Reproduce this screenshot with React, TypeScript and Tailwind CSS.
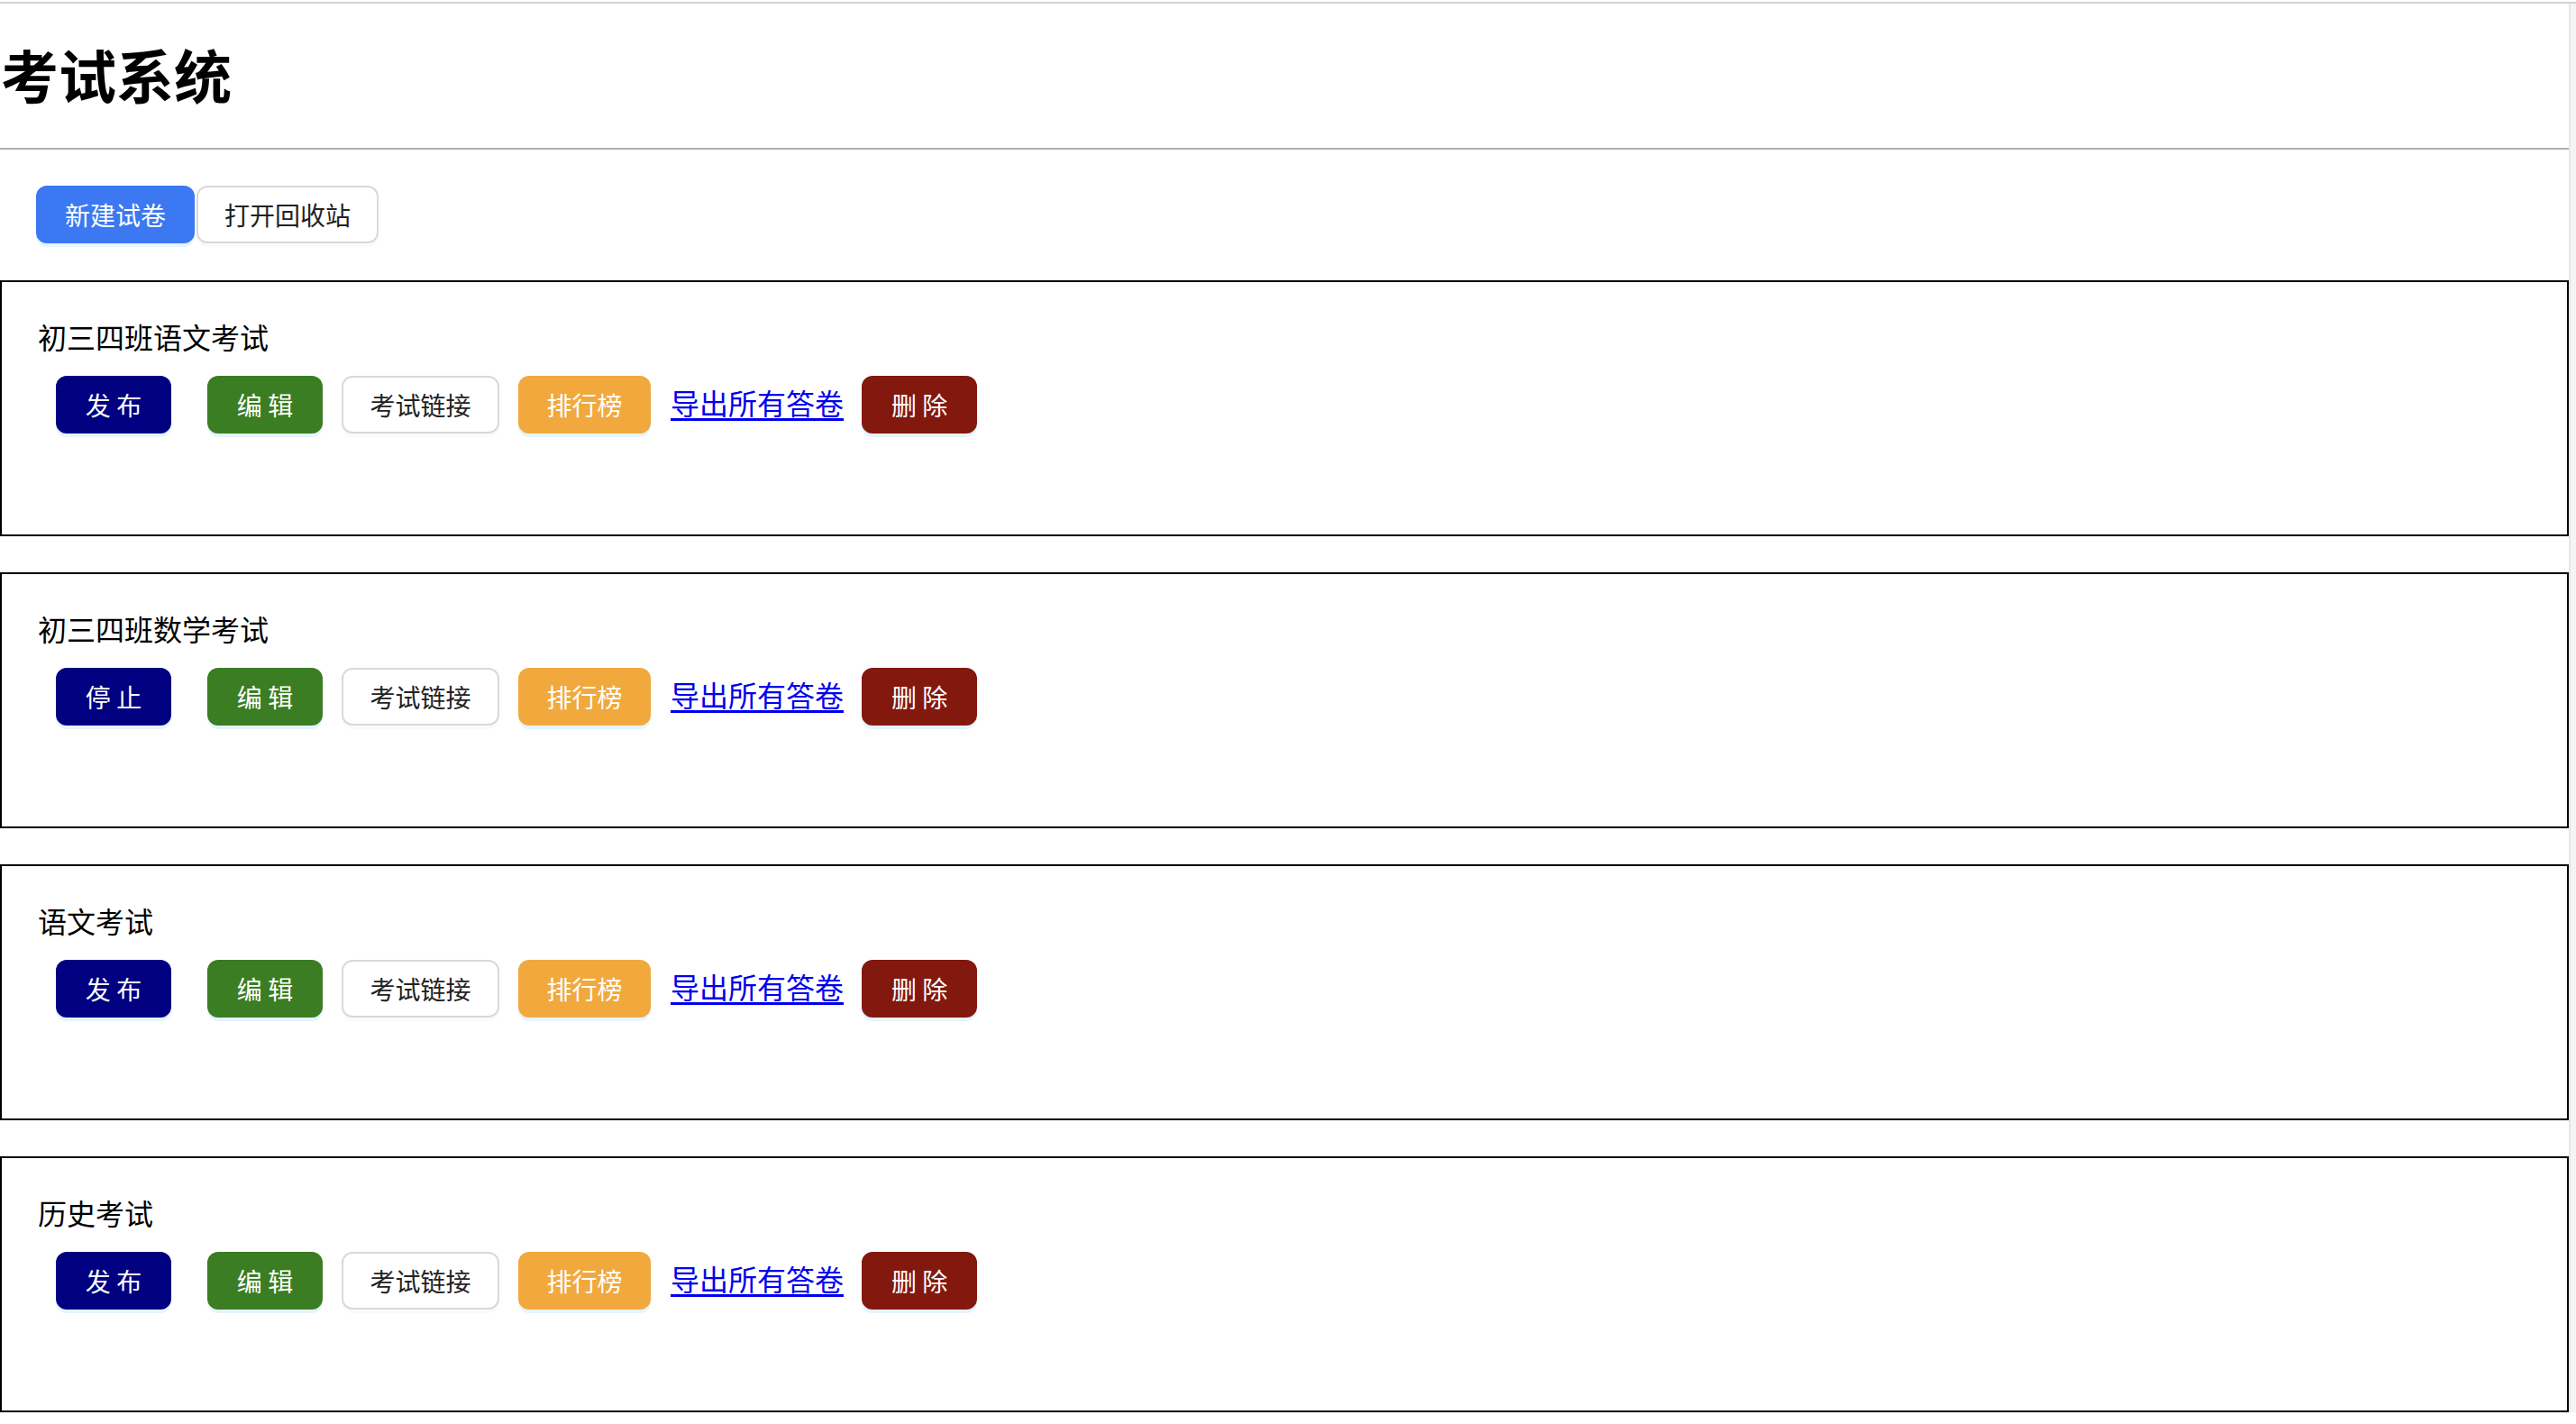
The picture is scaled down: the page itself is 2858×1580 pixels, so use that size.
import React from "react"

const exams = [
  { title: "初三四班语文考试", status: "发 布" },
  { title: "初三四班数学考试", status: "停 止" },
  { title: "语文考试", status: "发 布" },
  { title: "历史考试", status: "发 布" },
]

const sans = "font-['Noto_Sans_CJK_SC','Noto_Sans',sans-serif]"
const serif = "font-['Liberation_Serif','Noto_Sans_CJK_SC',serif]"

function Btn({
  children,
  className,
}: {
  children: React.ReactNode
  className: string
}) {
  return (
    <button
      className={`h-[64px] flex items-center justify-center rounded-[12px] border-2 text-[28px] leading-none whitespace-pre ${sans} ${className}`}
    >
      {children}
    </button>
  )
}

export default function App() {
  return (
    <div className="min-h-screen bg-white pt-[2px]">
      <div className="h-[2px] bg-[#d2d2d2]" />
      <div className="flex">
        <main className="flex-1">
          <h1 className={`mt-[52px] mb-[44px] pl-[1px] text-[64px] leading-[64px] font-bold text-black ${serif}`}>
            考试系统
          </h1>
          <hr className="border-t-2 border-[#adadad]" />

          {/* toolbar */}
          <div className="flex pl-[40px] mt-[40px]">
            <Btn className="w-[176px] bg-[#3b78f2] border-[#3b78f2] text-white shadow-[0_4px_0_rgba(5,145,255,0.1)]">
              新建试卷
            </Btn>
            <Btn className="ml-[2px] w-[202px] bg-white border-[#d9d9d9] text-[#222] shadow-[0_4px_0_rgba(0,0,0,0.02)]">
              打开回收站
            </Btn>
          </div>

          {/* exam list */}
          <div className="mt-[41px] flex flex-col gap-[40px]">
            {exams.map((exam, i) => (
              <div key={i} className="h-[284px] border-2 border-black p-[40px]">
                <div className={`h-[46px] leading-[46px] text-[32px] text-black ${serif}`}>{exam.title}</div>
                <div className="mt-[18px] flex items-center">
                  <Btn className="ml-[20px] w-[128px] bg-[#000080] border-[#000080] text-white shadow-[0_4px_0_rgba(5,145,255,0.1)]">
                    {exam.status}
                  </Btn>
                  <Btn className="ml-[40px] w-[128px] bg-[#3a7d23] border-[#3a7d23] text-white shadow-[0_4px_0_rgba(5,145,255,0.1)]">
                    编 辑
                  </Btn>
                  <Btn className="ml-[21px] w-[175px] bg-white border-[#d9d9d9] text-[#222] shadow-[0_4px_0_rgba(0,0,0,0.02)]">
                    考试链接
                  </Btn>
                  <Btn className="ml-[21px] w-[147px] bg-[#f1a93d] border-[#f1a93d] text-white shadow-[0_4px_0_rgba(5,145,255,0.1)]">
                    排行榜
                  </Btn>
                  <a
                    href="#"
                    className={`ml-[22px] text-[32px] leading-none text-[#0000ee] underline underline-offset-[4px] ${serif}`}
                  >
                    导出所有答卷
                  </a>
                  <Btn className="ml-[20px] w-[128px] bg-[#83180f] border-[#83180f] text-white shadow-[0_4px_0_rgba(5,145,255,0.1)]">
                    删 除
                  </Btn>
                </div>
              </div>
            ))}
          </div>
        </main>
        <div className="w-[8px] shrink-0 bg-[#f4f4f4] border-l-2 border-[#e6e6e6]" />
      </div>
    </div>
  )
}
